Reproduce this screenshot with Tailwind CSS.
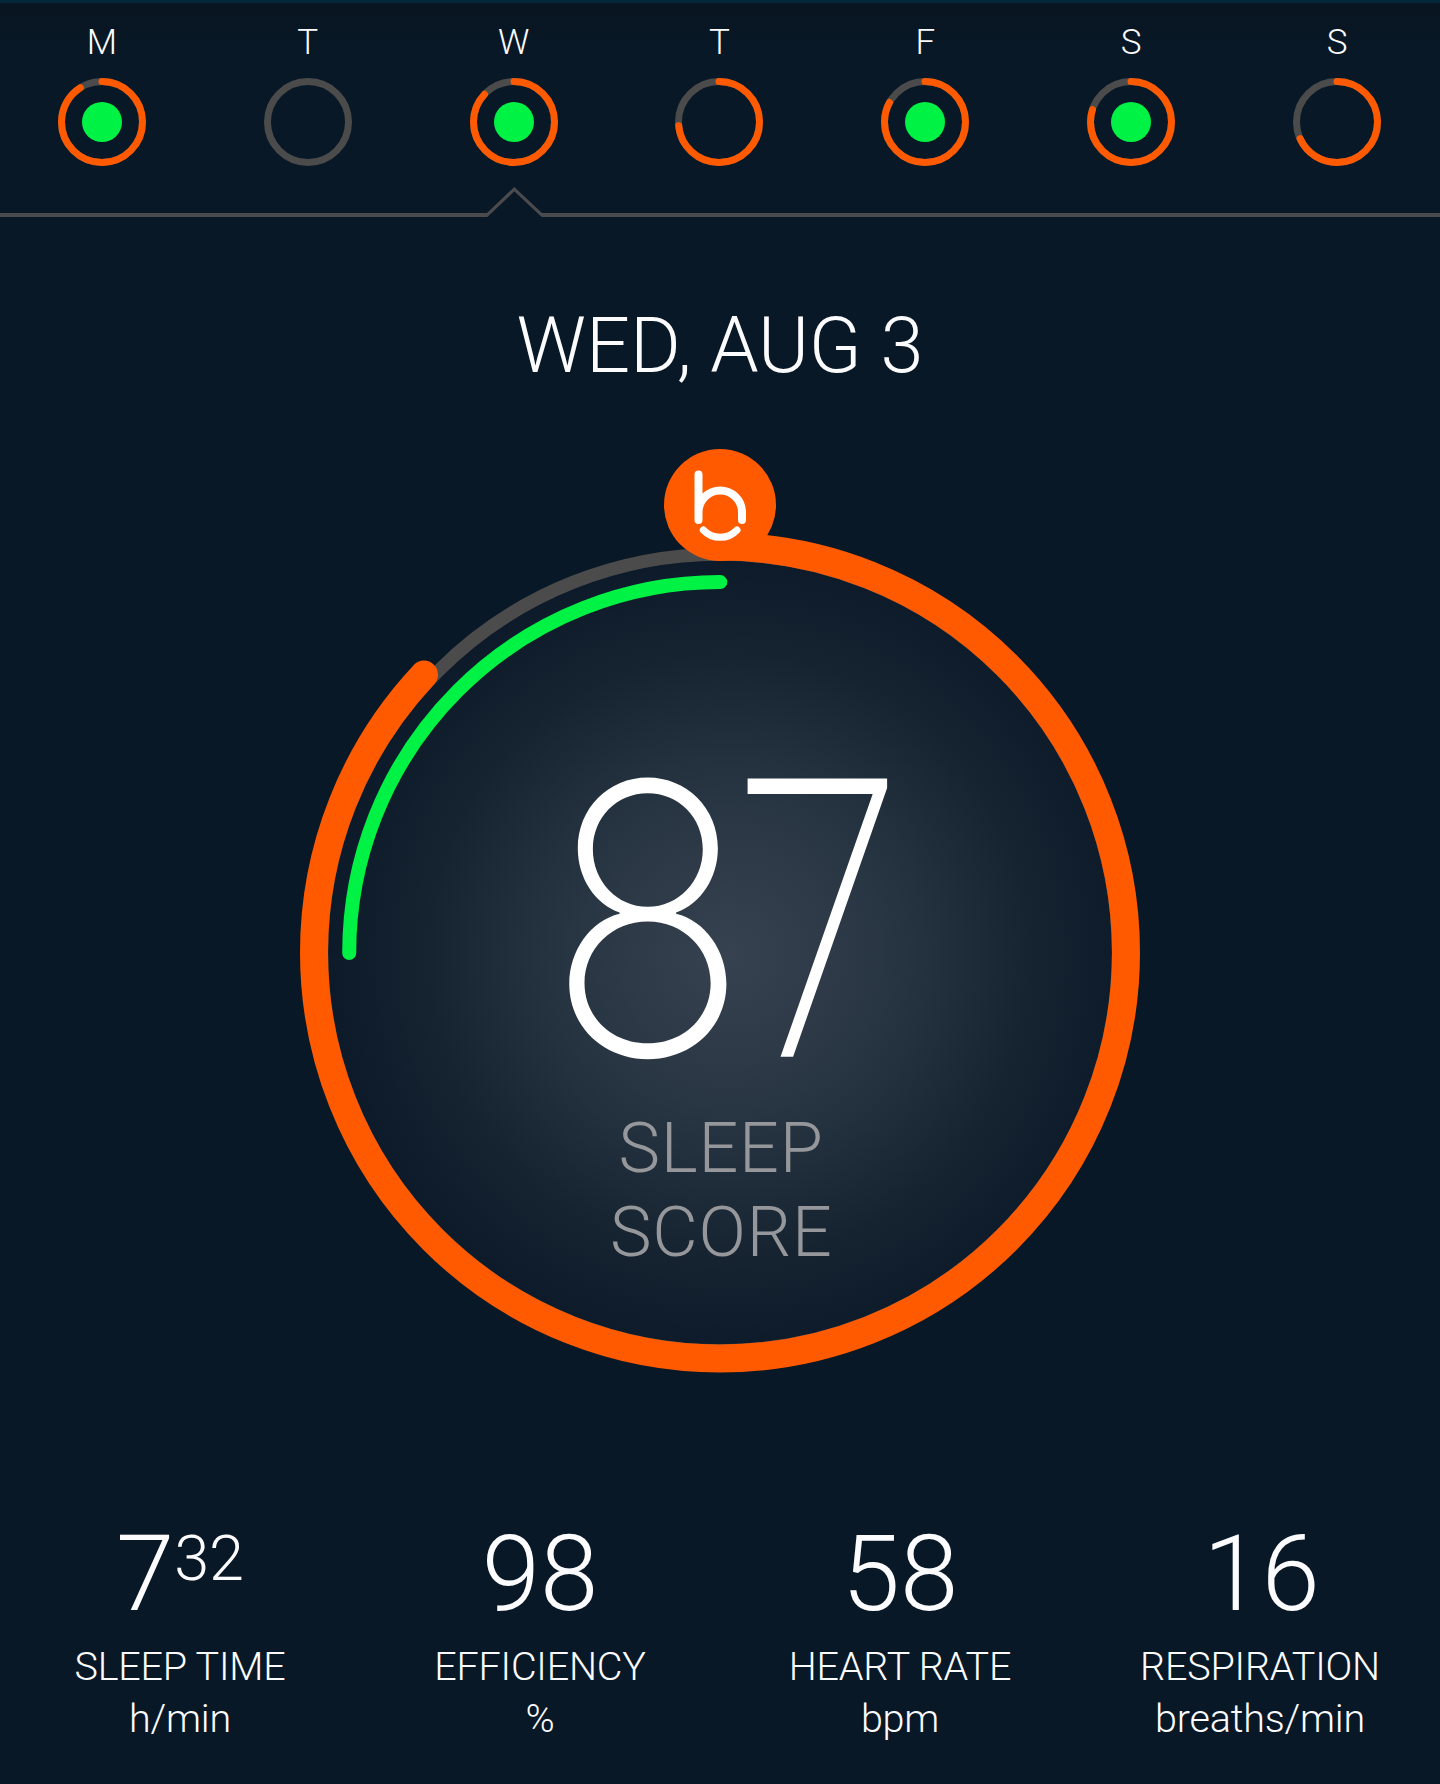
<!DOCTYPE html>
<html lang="en">
<head>
<meta charset="utf-8">
<title>Sleep score</title>
<script src="https://cdn.jsdelivr.net/npm/@tailwindcss/browser@4"></script>
</head>
<body class="bg-[#081826]">
<main class="flex h-[1784px] w-[1440px] flex-col overflow-hidden border-t-[3px] border-[#04283b] bg-[#081826] font-['Roboto',sans-serif] font-light text-[#fcfcff]">

  <!-- Week strip -->
  <nav id="week" class="-ml-px grid w-[1441px] grid-cols-7 bg-linear-to-b from-[#091521] to-[#081826] to-30% pt-[20px]"></nav>

  <!-- Divider with the marker under the selected day -->
  <svg class="h-[54px] w-[1440px] shrink-0" viewBox="0 166 1440 54" fill="none" stroke="#4b4b4e">
    <path d="M0 215H487.5M541.5 215H1440" stroke-width="4"/>
    <path d="M486.5 215.6L514.3 189.2L542.5 215.6" stroke-width="3.2"/>
  </svg>

  <h1 class="mt-[86px] text-center text-[77.5px] leading-[80px] tracking-[-0.1px]">WED, AUG 3</h1>

  <!-- Score dial -->
  <svg class="mt-[54px] h-[940px] w-[1440px] shrink-0" viewBox="0 440 1440 940" fill="none">
    <defs>
      <radialGradient id="glow" gradientUnits="userSpaceOnUse" cx="730" cy="955" r="400">
        <stop offset="0" stop-color="#36424f"/>
        <stop offset=".25" stop-color="#2e3a47"/>
        <stop offset=".5" stop-color="#23313e"/>
        <stop offset=".75" stop-color="#162432"/>
        <stop offset="1" stop-color="#0c1a29"/>
      </radialGradient>
    </defs>
    <circle cx="720" cy="952.5" r="394" fill="url(#glow)"/>
    <circle cx="720" cy="952.5" r="398.3" stroke="#4b4b4b" stroke-width="13"/>
    <circle cx="720" cy="952.5" r="406" stroke="#ff5a00" stroke-width="28" stroke-linecap="round" pathLength="100" stroke-dasharray="87 100" transform="rotate(-90 720 952.5)"/>
    <path d="M349.2 953A370.8 370.8 0 0 1 720.3 582.1" stroke="#00f244" stroke-width="14" stroke-linecap="round"/>
    <circle cx="720" cy="505" r="56" fill="#ff5a00"/>
    <g stroke="#fff" stroke-linecap="round">
      <path d="M698.5 474.5V520M698.5 520V512.3A21.7 21.7 0 0 1 742 512.3V520" stroke-width="8"/>
      <path d="M703.3 530A23 23 0 0 0 737 530" stroke-width="7"/>
    </g>
    <g fill="#fff">
      <text class="font-['Inter',sans-serif] text-[377px] font-extralight" transform="translate(546.5 1055.5) scale(.89 1)">8</text>
      <text class="font-['Roboto',sans-serif] text-[384px] font-thin" stroke="#fff" stroke-width="5.4" stroke-linejoin="miter" transform="translate(738.5 1054.1) scale(.776 1)">7</text>
    </g>
    <g class="text-[70px] tracking-[0.8px]" fill="#95979a" text-anchor="middle">
      <text x="721" y="1171.7">SLEEP</text>
      <text x="721.4" y="1255.7">SCORE</text>
    </g>
  </svg>

  <!-- Nightly metrics -->
  <section class="mt-[142px] grid grid-cols-4 text-center text-[39.5px] leading-[52px] tracking-[-0.2px]">
    <div>
      <div class="flex justify-center text-[105px] leading-[105px] tracking-normal">7<span class="mt-[5px] text-[63px] leading-[63px]">32</span></div>
      <div class="mt-[14px]">SLEEP TIME</div>
      <div>h/min</div>
    </div>
    <div>
      <div class="text-[105px] leading-[105px] tracking-normal">98</div>
      <div class="mt-[14px]">EFFICIENCY</div>
      <div>%</div>
    </div>
    <div>
      <div class="text-[105px] leading-[105px] tracking-normal">58</div>
      <div class="mt-[14px]">HEART RATE</div>
      <div>bpm</div>
    </div>
    <div>
      <div class="pl-[3px] text-[105px] leading-[105px] tracking-normal">16</div>
      <div class="mt-[14px]">RESPIRATION</div>
      <div>breaths/min</div>
    </div>
  </section>
</main>
<script>
  // score: percent of the ring filled; goal: whether the green dot is shown
  const days = [
    { name: 'M', score: 91, goal: true },
    { name: 'T', score: 0, goal: false },
    { name: 'W', score: 87, goal: true },
    { name: 'T', score: 73.5, goal: false },
    { name: 'F', score: 83, goal: true },
    { name: 'S', score: 80, goal: true },
    { name: 'S', score: 68.2, goal: false },
  ];
  document.getElementById('week').innerHTML = days.map(d => `
    <div class="flex flex-col items-center gap-[15px]">
      <span class="text-[35px] leading-[40px]">${d.name}</span>
      <svg class="size-[88px]" viewBox="0 0 88 88" fill="none" stroke-width="7">
        <circle cx="44" cy="44" r="40.5" stroke="#4b4b4b"/>
        ${d.score ? `<circle cx="44" cy="44" r="40.5" stroke="#ff5a00" stroke-linecap="round" pathLength="100" stroke-dasharray="${d.score} 100" transform="rotate(-90 44 44)"/>` : ''}
        ${d.goal ? '<circle cx="44" cy="44" r="20" fill="#00f244"/>' : ''}
      </svg>
    </div>`).join('');
</script>
</body>
</html>
